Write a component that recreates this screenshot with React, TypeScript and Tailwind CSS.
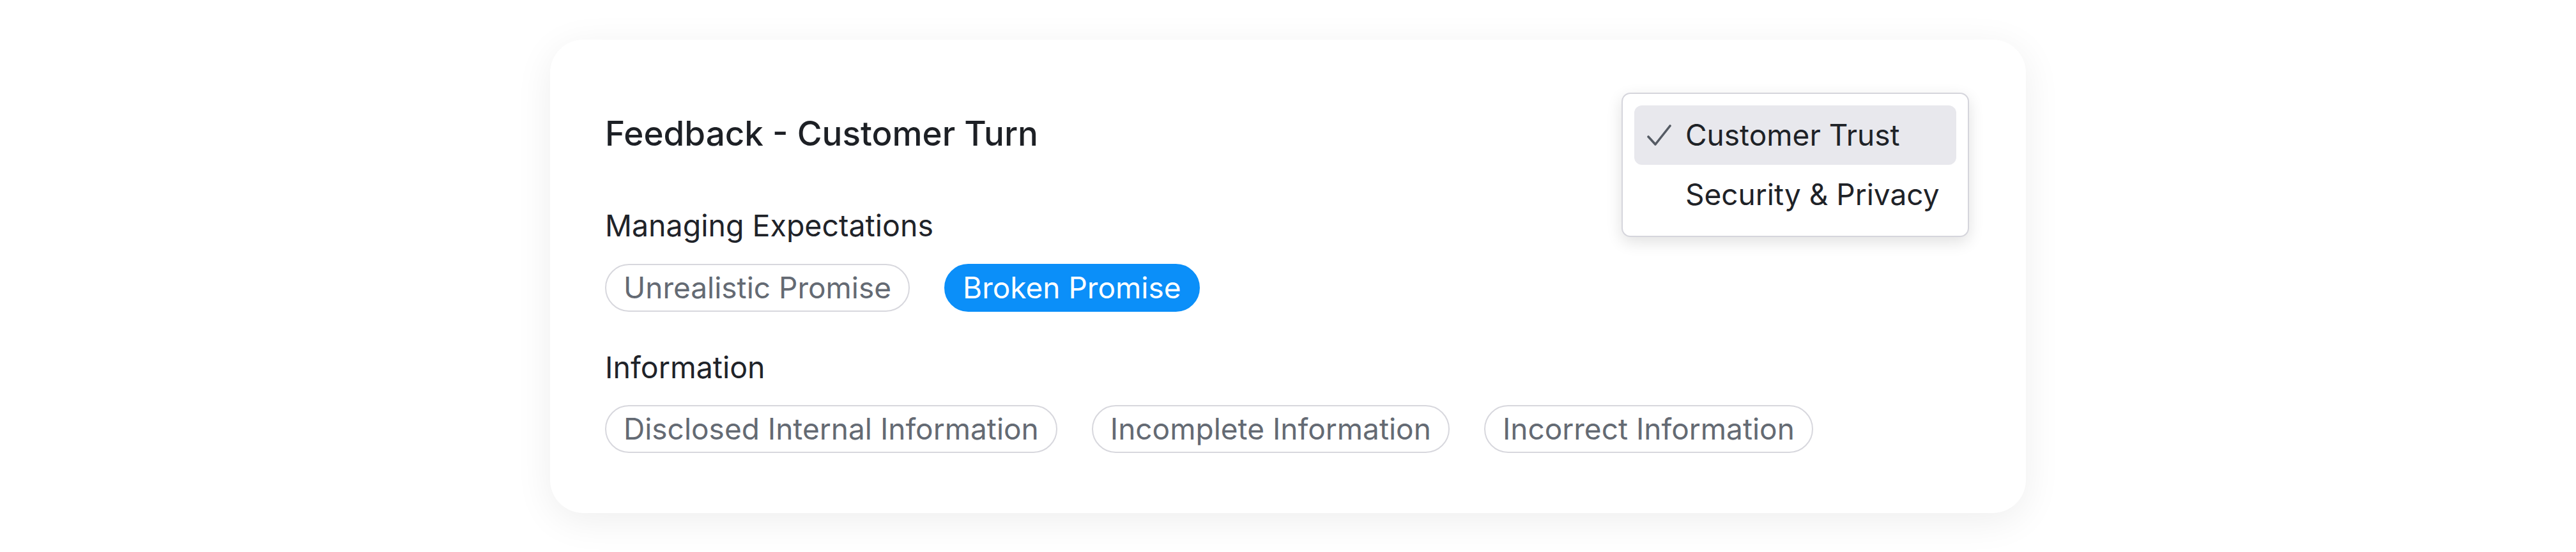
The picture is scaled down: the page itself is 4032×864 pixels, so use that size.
import type { ReactNode } from 'react'

function Chip({ label, active = false }: { label: string; active?: boolean }) {
  return (
    <span
      className={
        active
          ? 'h-[75px] px-[27px] flex items-center rounded-full border-2 border-[#0b8ff9] bg-[#0b8ff9] text-white text-[46px] leading-none'
          : 'h-[75px] px-[27px] flex items-center rounded-full border-2 border-[#d7d7dd] bg-white text-[#646a73] text-[46px] leading-none'
      }
    >
      {label}
    </span>
  )
}

function MenuItem({ children, checked = false }: { children: ReactNode; checked?: boolean }) {
  return (
    <div
      className={
        'h-[93px] pl-[20px] flex items-center gap-[22px] rounded-[12px] ' +
        (checked ? 'bg-[#e8e8ed]' : '')
      }
    >
      <span className="w-[38px] h-[33px] flex items-center justify-center">
        {checked && (
          <svg viewBox="0 0 38 33" className="w-[38px] h-[33px]" fill="none">
            <polyline
              points="2,19 13,31 36,2"
              stroke="#555b64"
              strokeWidth="3.6"
              strokeLinecap="round"
              strokeLinejoin="round"
            />
          </svg>
        )}
      </span>
      <span className="text-[46px] leading-none text-[#1e2227]">{children}</span>
    </div>
  )
}

export default function App() {
  return (
    <div className="w-full h-screen bg-white flex items-center justify-center font-['Inter',sans-serif]">
      <div className="relative w-[2310px] bg-white rounded-[52px] shadow-[0_12px_60px_rgba(0,0,0,0.07)] pt-[116px] pb-[94px] px-[86px]">
        {/* Title */}
        <h1 className="text-[53px] leading-[62px] font-medium text-[#1d2025]">Feedback - Customer Turn</h1>

        {/* Managing Expectations */}
        <h2 className="mt-[83px] text-[46.5px] leading-[60px] text-[#1f2329]">Managing Expectations</h2>
        <div className="mt-[30px] flex gap-[54px]">
          <Chip label="Unrealistic Promise" />
          <Chip label="Broken Promise" active />
        </div>

        {/* Information */}
        <h2 className="mt-[57px] text-[46.5px] leading-[60px] text-[#1f2329]">Information</h2>
        <div className="mt-[29px] flex gap-[54px]">
          <Chip label="Disclosed Internal Information" />
          <Chip label="Incomplete Information" />
          <Chip label="Incorrect Information" />
        </div>

        {/* Category menu */}
        <div className="absolute top-[83px] right-[89px] w-[544px] bg-white border-2 border-[#d5d5dc] rounded-[14px] p-[18px] shadow-[0_8px_24px_rgba(0,0,0,0.12)]">
          <MenuItem checked>Customer Trust</MenuItem>
          <MenuItem>Security &amp; Privacy</MenuItem>
        </div>
      </div>
    </div>
  )
}
